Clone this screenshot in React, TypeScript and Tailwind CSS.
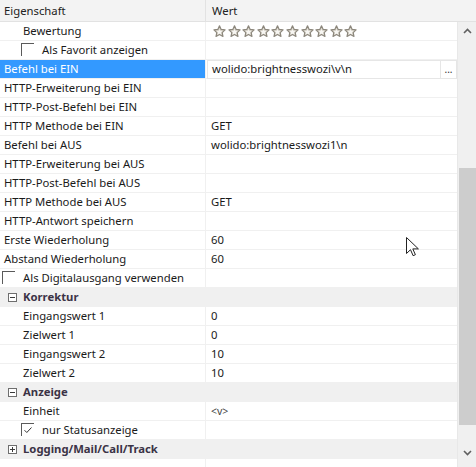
import React from "react";

type Row = {
  name: string;
  value?: string;
  kind?: "normal" | "cat" | "check";
  indent?: boolean;
  checked?: boolean;
  expanded?: boolean;
  selected?: boolean;
  stars?: boolean;
};

const rows: Row[] = [
  { name: "Bewertung", indent: true, stars: true },
  { name: "Als Favorit anzeigen", kind: "check", indent: true },
  { name: "Befehl bei EIN", value: "wolido:brightnesswozi\\v\\n", selected: true },
  { name: "HTTP-Erweiterung bei EIN" },
  { name: "HTTP-Post-Befehl bei EIN" },
  { name: "HTTP Methode bei EIN", value: "GET" },
  { name: "Befehl bei AUS", value: "wolido:brightnesswozi1\\n" },
  { name: "HTTP-Erweiterung bei AUS" },
  { name: "HTTP-Post-Befehl bei AUS" },
  { name: "HTTP Methode bei AUS", value: "GET" },
  { name: "HTTP-Antwort speichern" },
  { name: "Erste Wiederholung", value: "60" },
  { name: "Abstand Wiederholung", value: "60" },
  { name: "Als Digitalausgang verwenden", kind: "check" },
  { name: "Korrektur", kind: "cat", expanded: true },
  { name: "Eingangswert 1", value: "0", indent: true },
  { name: "Zielwert 1", value: "0", indent: true },
  { name: "Eingangswert 2", value: "10", indent: true },
  { name: "Zielwert 2", value: "10", indent: true },
  { name: "Anzeige", kind: "cat", expanded: true },
  { name: "Einheit", value: "<v>", indent: true },
  { name: "nur Statusanzeige", kind: "check", indent: true, checked: true },
  { name: "Logging/Mail/Call/Track", kind: "cat" },
];

const Star = () => (
  <svg width="13" height="13" viewBox="0 0 24 24">
    <path
      d="M12 1.5l3.1 6.6 7.2.9-5.3 5 1.4 7.1L12 17.6l-6.4 3.5 1.4-7.1-5.3-5 7.2-.9z"
      fill="#d9d5cb"
      stroke="#8c877c"
      strokeWidth="2.2"
      strokeLinejoin="round"
    />
    <path d="M12 7.5l1.6 3.4 3.7.5-2.7 2.5.7 3.7L12 15.8l-3.3 1.8.7-3.7-2.7-2.5 3.7-.5z" fill="#f7f6f2" />
  </svg>
);

const Box = ({ plus }: { plus?: boolean }) => (
  <div className="w-[9px] h-[9px] border border-[#6e6e6e] flex items-center justify-center relative bg-white">
    <div className="w-[5px] h-px bg-[#3a3a3a]" />
    {plus && <div className="absolute w-px h-[5px] bg-[#3a3a3a]" />}
  </div>
);

const CheckBox = ({ checked }: { checked?: boolean }) => (
  <div className="w-[13px] h-[13px] border-l border-t border-[#5a5a5a] flex items-center justify-center">
    {checked && (
      <svg width="10" height="10" viewBox="0 0 10 10">
        <path d="M1.5 5.2l2.3 2.3L8.5 2.5" fill="none" stroke="#333" strokeWidth="1" />
      </svg>
    )}
  </div>
);

const PropRow = ({ r }: { r: Row }) => {
  if (r.kind === "cat") {
    return (
      <div className="h-[19px] flex items-center bg-[#f0f0f0] border-b border-[#f0f0f0]">
        <div className="w-[23px] flex justify-center pl-px">
          <Box plus={!r.expanded} />
        </div>
        <span className="font-bold text-[#3b3346]">{r.name}</span>
      </div>
    );
  }
  return (
    <div className="h-[19px] flex border-b border-[#f0f0f0]">
      <div
        className={`w-[206px] shrink-0 flex items-center border-r border-[#f0f0f0] ${
          r.selected ? "bg-[#3399ff] text-white" : "text-[#1a1a1a]"
        } ${r.indent ? (r.kind === "check" ? "pl-[21px]" : "pl-[23px]") : r.kind === "check" ? "pl-[2px]" : "pl-[4px]"}`}
      >
        {r.kind === "check" && (
          <div className="mr-[8px] self-end mb-[3px]">
            <CheckBox checked={r.checked} />
          </div>
        )}
        <span className="whitespace-nowrap">{r.name}</span>
      </div>
      <div className="flex-1 flex items-center pl-[5px] text-[#1a1a1a] min-w-0">
        {r.stars && (
          <div className="flex gap-[1.6px] pl-[2px]">
            {Array.from({ length: 10 }).map((_, i) => (
              <Star key={i} />
            ))}
          </div>
        )}
        {r.selected ? (
          <div className="flex-1 h-[19px] flex items-center border border-[#e6e6e6] -ml-[4px] pl-[4px]">
            <span className="flex-1 whitespace-nowrap">{r.value}</span>
            <div className="w-[16px] h-[17px] border-l border-[#e6e6e6] flex items-end justify-center pb-[4px] text-[10px] leading-none text-[#333]">
              ...
            </div>
          </div>
        ) : (
          r.value && (
            <span className={`whitespace-nowrap ${r.value === "<v>" ? "text-[10.5px] text-[#444]" : ""}`}>{r.value}</span>
          )
        )}
      </div>
    </div>
  );
};

const Cursor = () => (
  <svg className="absolute left-[406px] top-[237px]" width="13" height="21" viewBox="0 0 13 21">
    <path d="M0.5 0.5v16l4-3.8 2.6 6 2.3-1-2.6-5.8h5.6z" fill="#fff" stroke="#222" strokeWidth="1" />
  </svg>
);

export default function App() {
  return (
    <div
      className="relative w-[476px] h-[467px] bg-white overflow-hidden text-[11.3px] leading-none"
      style={{ fontFamily: '"Noto Sans", "Open Sans", sans-serif' }}
    >
      <div className="h-[22px] flex bg-[#f3f3f3] border-b border-[#e2e2e2] text-[#222]">
        <div className="w-[206px] flex items-center pl-[4px] border-r border-[#e2e2e2]">Eigenschaft</div>
        <div className="flex-1 flex items-center pl-[6px]">Wert</div>
      </div>
      <div className="flex h-[445px]">
        <div className="flex-1 flex flex-col">
          {rows.map((r, i) => (
            <PropRow key={i} r={r} />
          ))}
          <div className="flex-1 flex">
            <div className="w-[206px] border-r border-[#f0f0f0]" />
          </div>
        </div>
        <div className="w-[19px] bg-[#f0f0f0] flex flex-col items-center border-l border-[#e8e8e8]">
          <div className="h-[18px] w-full flex items-center justify-center">
            <svg width="9" height="6" viewBox="0 0 9 6">
              <path d="M1 5l3.5-3.5L8 5" fill="none" stroke="#606060" strokeWidth="1.6" />
            </svg>
          </div>
          <div className="h-[128px]" />
          <div className="w-[17px] h-[257px] bg-[#cdcdcd]" />
          <div className="flex-1" />
          <div className="h-[18px] w-full flex items-center justify-center">
            <svg width="9" height="6" viewBox="0 0 9 6">
              <path d="M1 1l3.5 3.5L8 1" fill="none" stroke="#606060" strokeWidth="1.6" />
            </svg>
          </div>
          <div className="h-[5px]" />
        </div>
      </div>
      <Cursor />
    </div>
  );
}
